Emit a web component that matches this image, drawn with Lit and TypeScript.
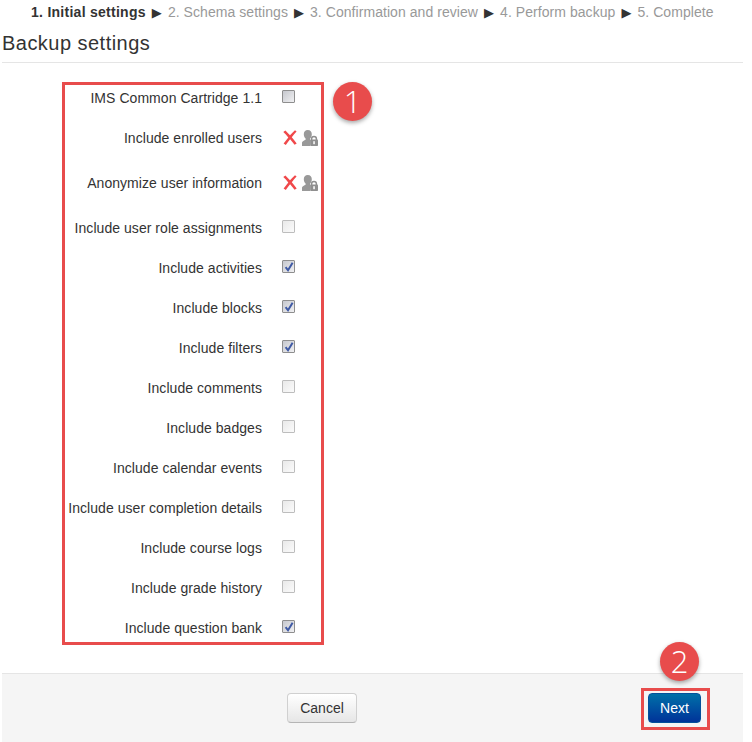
import { LitElement, html, css, svg } from "lit";
import { customElement } from "lit/decorators.js";

type Row = { label: string; kind: "dark" | "off" | "on" | "locked" };

const ROWS: Row[] = [
  { label: "IMS Common Cartridge 1.1", kind: "dark" },
  { label: "Include enrolled users", kind: "locked" },
  { label: "Anonymize user information", kind: "locked" },
  { label: "Include user role assignments", kind: "off" },
  { label: "Include activities", kind: "on" },
  { label: "Include blocks", kind: "on" },
  { label: "Include filters", kind: "on" },
  { label: "Include comments", kind: "off" },
  { label: "Include badges", kind: "off" },
  { label: "Include calendar events", kind: "off" },
  { label: "Include user completion details", kind: "off" },
  { label: "Include course logs", kind: "off" },
  { label: "Include grade history", kind: "off" },
  { label: "Include question bank", kind: "on" },
];

const STEPS = ["2. Schema settings", "3. Confirmation and review", "4. Perform backup", "5. Complete"];

const crossIcon = svg`<svg class="cross" width="14" height="15" viewBox="0 0 14 15" aria-hidden="true"><path d="M.3 2 L2.4 .4 C4 2 5.6 3.8 7 5.2 C8.6 3.6 10.2 1.9 12 .2 L13.6 1.6 C11.9 3.5 10.3 5.4 8.8 7.2 C10.4 9.2 12 11.3 13.7 13.6 L11.6 14.8 C10.1 12.8 8.6 10.9 7.1 9.2 C5.7 10.9 4.2 12.8 2.8 14.9 L.6 13.6 C2.2 11.4 3.8 9.3 5.3 7.4 C3.7 5.5 2 3.7 .3 2 Z" fill="#f0484a"/></svg>`;

const lockedUserIcon = svg`<svg class="locked" width="16" height="16" viewBox="0 0 16 16" aria-hidden="true"><path d="M5.8 0 C8.4 0 9.8 1.9 9.8 4.3 C9.8 6 9.2 7.6 8.1 8.6 L8.1 9.8 L8.6 10.2 L8.2 16 L0 16 L0 12.6 C0 11.4 2.4 10.6 3.6 9.8 L3.6 8.6 C2.5 7.6 1.8 6 1.8 4.3 C1.8 1.9 3.2 0 5.8 0 Z" fill="#999"/><path d="M9.6 10 V8.8 C9.6 7.3 10.6 6.5 12 6.5 C13.4 6.5 14.4 7.3 14.4 8.8 V10" fill="none" stroke="#8f8f8f" stroke-width="1.5"/><rect x="8.2" y="9.6" width="7.8" height="6.4" rx=".8" fill="#8f8f8f"/><rect x="11.3" y="11.2" width="1.5" height="3" fill="#fff"/></svg>`;

const tick = svg`<svg class="tick" width="10" height="10" viewBox="0 0 10 10" aria-hidden="true"><path d="M1.6 5.2 L4 8.2 L8.6 .8" fill="none" stroke="#3f5aa5" stroke-width="2"/></svg>`;

@customElement("app-root")
export class AppRoot extends LitElement {
  static styles = css`
    :host {
      display: block;
      position: relative;
      width: 752px;
      height: 742px;
      overflow: hidden;
      background: #fff;
      font-family: "Liberation Sans", Arial, sans-serif;
      font-size: 14px;
      color: #333;
    }
    .steps {
      display: flex;
      justify-content: flex-start;
      align-items: center;
      gap: 6px;
      height: 24px;
      padding-left: 31px;
      color: #999;
      letter-spacing: 0.055px;
      white-space: nowrap;
    }
    .steps b {
      color: #333;
      letter-spacing: 0.27px;
    }
    .arrow {
      color: #333;
      font-family: "DejaVu Sans", sans-serif;
      font-size: 13px;
      line-height: 1;
    }
    h2 {
      margin: 0 9px 0 2px;
      height: 39px;
      box-sizing: border-box;
      border-bottom: 1px solid #e5e5e5;
      font-size: 20px;
      font-weight: 400;
      line-height: 38px;
      letter-spacing: 0.47px;
    }
    form {
      display: block;
      margin: 15px 0 0;
    }
    .row {
      display: flex;
      height: 40px;
    }
    .row.tall {
      height: 45px;
    }
    .label {
      width: 262px;
      padding-top: 10px;
      box-sizing: border-box;
      line-height: 20px;
      letter-spacing: 0.05px;
      text-align: right;
      white-space: nowrap;
    }
    .ctl {
      display: flex;
      align-items: flex-start;
      margin-left: 20px;
      padding-top: 12px;
    }
    .ctl.icons {
      margin-left: 21px;
      gap: 5px;
    }
    .box {
      display: flex;
      align-items: center;
      justify-content: center;
      width: 13px;
      height: 13px;
      box-sizing: border-box;
      border: 1px solid #bdbdbd;
      border-radius: 1px;
      background: linear-gradient(135deg, #e9e9e9, #fbfbfb);
    }
    .box.dark,
    .box.on {
      border-color: #8e8e8e;
      background: linear-gradient(135deg, #c6c8ce, #f0f0f2);
    }
    .cross, .locked, .tick {
      display: block;
      flex: none;
    }
    .footer {
      display: flex;
      align-items: flex-start;
      box-sizing: border-box;
      position: absolute;
      left: 2px;
      right: 9px;
      bottom: 0;
      height: 69px;
      padding: 19px 0 0 285px;
      border-top: 1px solid #e5e5e5;
      background: #f5f5f5;
    }
    button {
      height: 30px;
      box-sizing: border-box;
      padding: 0;
      font: inherit;
      border-radius: 4px;
    }
    .cancel {
      width: 70px;
      color: #333;
      border: 1px solid #d0d0d0;
      border-bottom-color: #b5b5b5;
      background: linear-gradient(#fff, #e6e6e6);
    }
    .next {
      width: 53px;
      margin-left: 291px;
      color: #fff;
      border: 1px solid #04519b;
      background: linear-gradient(#0070a8, #003399);
    }
    .mark {
      position: absolute;
      box-sizing: border-box;
      border: 3px solid #e84c4c;
      pointer-events: none;
    }
    .mark.form-mark {
      left: 62px;
      top: 82px;
      width: 262px;
      height: 563px;
    }
    .mark.next-mark {
      left: 641px;
      top: 688px;
      width: 69px;
      height: 42px;
    }
    .badge {
      position: absolute;
      display: flex;
      align-items: center;
      justify-content: center;
      width: 39px;
      height: 39px;
      border-radius: 50%;
      background: #e84c4c;
      box-shadow: 0 2px 4px rgba(0, 0, 0, 0.35);
      color: #fff;
      font-family: "Open Sans", sans-serif;
      font-weight: 300;
      font-size: 31px;
      line-height: 1;
    }
    .badge.one {
      left: 333px;
      top: 82px;
    }
    .badge.two {
      left: 660px;
      top: 642px;
    }
  `;

  render() {
    return html`
      <nav class="steps">
        <b>1. Initial settings</b>
        ${STEPS.map(
          (s) => html`<span class="arrow">▶</span><span>${s}</span>`
        )}
      </nav>
      <h2>Backup settings</h2>
      <form>
        ${ROWS.map(
          (r) => html`
            <div class="row ${r.kind === "locked" ? "tall" : ""}">
              <div class="label">${r.label}</div>
              ${r.kind === "locked"
                ? html`<div class="ctl icons">${crossIcon}${lockedUserIcon}</div>`
                : html`<div class="ctl"><span class="box ${r.kind}">${r.kind === "on" ? tick : ""}</span></div>`}
            </div>
          `
        )}
      </form>
      <footer class="footer">
        <button class="cancel" type="button">Cancel</button>
        <button class="next" type="button">Next</button>
      </footer>
      <div class="mark form-mark"></div>
      <div class="mark next-mark"></div>
      <div class="badge one">1</div>
      <div class="badge two">2</div>
    `;
  }
}
